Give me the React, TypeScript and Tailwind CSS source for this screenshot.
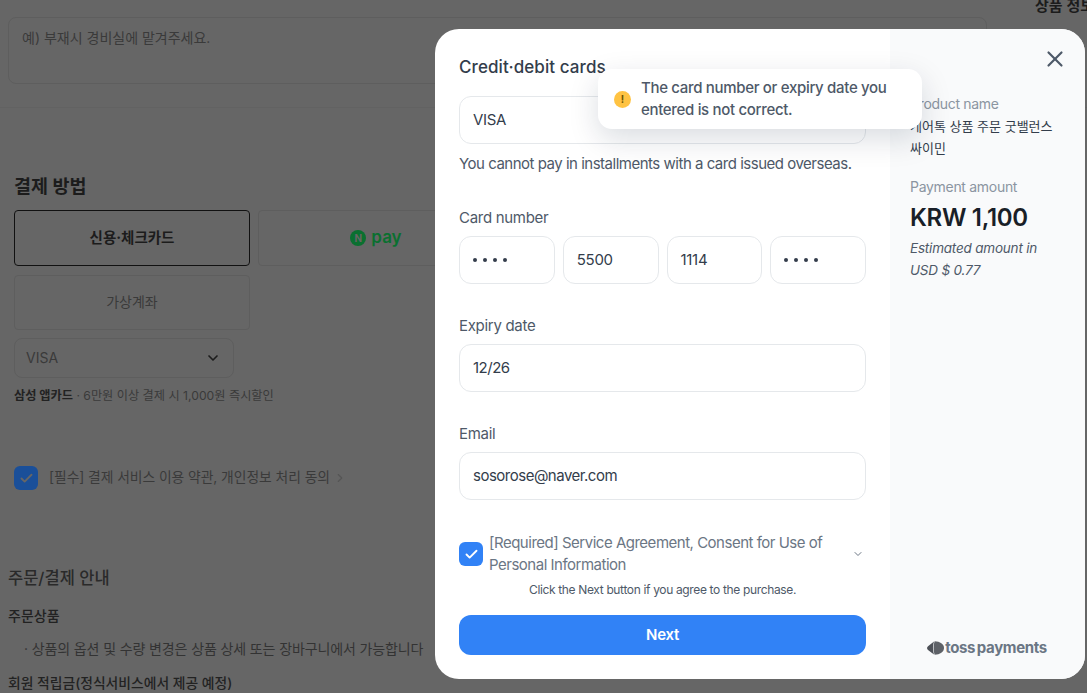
import { Check, ChevronDown, ChevronRight, X } from "lucide-react";

const font = "font-['Inter','Noto_Sans_CJK_KR',sans-serif]";

function Field({ label, value }: { label: string; value: string }) {
  return (
    <div className="mt-[30px]">
      <div className="text-[15px] leading-[24px] text-[#4e5968]">{label}</div>
      <div className="mt-[6px] flex h-[48px] items-center rounded-[12px] border border-[#e5e8eb] px-[13px] text-[15px] tracking-[-0.5px] text-[#333d4b]">
        {value}
      </div>
    </div>
  );
}

function Dots() {
  return (
    <span className="flex gap-[6.5px]">
      <i className="h-[3.5px] w-[3.5px] rounded-full bg-[#333d4b]" />
      <i className="h-[3.5px] w-[3.5px] rounded-full bg-[#333d4b]" />
      <i className="h-[3.5px] w-[3.5px] rounded-full bg-[#333d4b]" />
      <i className="h-[3.5px] w-[3.5px] rounded-full bg-[#333d4b]" />
    </span>
  );
}

function PageBehind() {
  return (
    <div className="text-[#2a2a2a]">
      {/* request note */}
      <div className="h-[108px] border-b border-[#626262] pt-[17px] pl-[8px] pr-[100px]">
        <div className="h-[67px] rounded-[8px] border border-[#5e5e5e] px-[13px] py-[10px] text-[14px] leading-[20px] text-[#3a3a3a]">
          예) 부재시 경비실에 맡겨주세요.
        </div>
      </div>

      {/* payment method */}
      <div className="pl-[14px] pt-[65px]">
        <h2 className="text-[18.5px] leading-[26px] font-bold text-[#1c1c1c]">결제 방법</h2>
        <div className="mt-[11px] grid w-[480px] grid-cols-[236px_236px] gap-x-[8px] gap-y-[9px]">
          <div className="flex h-[56px] items-center justify-center rounded-[4px] border border-[#111] pb-[1px] text-[14.5px] font-bold text-[#1c1c1c]">
            신용·체크카드
          </div>
          <div className="flex h-[56px] items-center justify-center gap-[5px] rounded-[4px] border border-[#5e5e5e]">
            <span className="flex h-[16px] w-[16px] items-center justify-center rounded-full bg-[#0a7030] text-[10px] font-bold text-[#666]">
              N
            </span>
            <span className="pb-[2px] text-[17px] leading-[16px] font-semibold text-[#0a7030]">pay</span>
          </div>
          <div className="flex h-[55px] items-center justify-center rounded-[4px] border border-[#5e5e5e] pb-[3px] text-[14px] text-[#3a3a3a]">
            가상계좌
          </div>
        </div>
        <div className="mt-[8px] flex h-[40px] w-[220px] items-center justify-between rounded-[8px] border border-[#5e5e5e] pb-[1px] pl-[11px] pr-[12px] text-[14px] text-[#3a3a3a]">
          VISA
          <ChevronDown size={16} strokeWidth={2.5} className="text-[#1c1c1c]" />
        </div>
        <p className="mt-[9px] text-[12.2px] leading-[18px] text-[#3a3a3a]">
          <b className="text-[#222]">삼성 앱카드</b> · 6만원 이상 결제 시 1,000원 즉시할인
        </p>
        <div className="mt-[61px] flex items-center gap-[11px]">
          <span className="flex h-[24px] w-[24px] items-center justify-center rounded-[6px] bg-[#1a4f99]">
            <Check size={15} strokeWidth={3} className="text-[#666]" />
          </span>
          <span className="pb-[2px] text-[13.8px] tracking-[-0.05px] text-[#3a3a3a]">
            [필수] 결제 서비스 이용 약관, 개인정보 처리 동의
          </span>
          <ChevronRight size={14} className="-ml-[8px] text-[#555]" />
        </div>
      </div>

      {/* order notice */}
      <div className="pl-[8px] pt-[76px]">
        <h3 className="text-[16.5px] leading-[24px] font-medium text-[#2a2a2a]">주문/결제 안내</h3>
        <div className="mt-[16px] text-[14px] leading-[20px] font-medium text-[#222]">주문상품</div>
        <div className="mt-[13px] pl-[16px] text-[14px] leading-[20px] tracking-[-0.12px] text-[#333]">
          · 상품의 옵션 및 수량 변경은 상품 상세 또는 장바구니에서 가능합니다
        </div>
        <div className="mt-[14px] text-[13.8px] leading-[20px] font-medium text-[#222]">
          회원 적립금(정식서비스에서 제공 예정)
        </div>
      </div>
    </div>
  );
}

export default function App() {
  return (
    <div className={`relative h-[693px] w-[1087px] overflow-hidden bg-[#666666] ${font}`}>
      <PageBehind />
      <div className="absolute top-[-4px] left-[1035px] text-[15px] leading-[20px] font-semibold whitespace-nowrap text-[#1c1c1c]">
        상품 정보
      </div>

      {/* modal */}
      <div className="absolute top-[29px] left-[435px] flex h-[650px] w-[650px] overflow-hidden rounded-[24px] bg-white">
        <div className="w-[455px] px-[24px] pt-[24px] tracking-[-0.3px]">
          <h1 className="text-[17px] leading-[28px] font-medium tracking-[0.08px] text-[#333d4b]">Credit·debit cards</h1>
          <div className="mt-[15px] flex h-[48px] items-center rounded-[12px] border border-[#e5e8eb] px-[13px] text-[15px] text-[#333d4b]">
            VISA
          </div>
          <p className="mt-[8px] text-[15px] leading-[24px] tracking-[-0.49px] whitespace-nowrap text-[#4e5968]">
            You cannot pay in installments with a card issued overseas.
          </p>

          <div className="mt-[30px] text-[15px] leading-[24px] text-[#4e5968]">Card number</div>
          <div className="mt-[6px] grid grid-cols-4 gap-[8px]">
            <div className="flex h-[48px] items-center rounded-[12px] border border-[#e5e8eb] px-[13px]"><Dots /></div>
            <div className="flex h-[48px] items-center rounded-[12px] border border-[#e5e8eb] px-[13px] text-[15px] text-[#333d4b]">5500</div>
            <div className="flex h-[48px] items-center rounded-[12px] border border-[#e5e8eb] px-[13px] text-[15px] text-[#333d4b]">1114</div>
            <div className="flex h-[48px] items-center rounded-[12px] border border-[#e5e8eb] px-[13px]"><Dots /></div>
          </div>

          <Field label="Expiry date" value="12/26" />
          <Field label="Email" value="sosorose@naver.com" />

          <div className="mt-[32px] flex items-center gap-[6px]">
            <span className="flex h-[24px] w-[24px] shrink-0 items-center justify-center rounded-[6px] bg-[#3182f6]">
              <Check size={15} strokeWidth={3} className="text-white" />
            </span>
            <span className="w-[350px] text-[15px] leading-[22px] tracking-[-0.49px] text-[#6b7684]">
              [Required] Service Agreement, Consent for Use of Personal Information
            </span>
            <ChevronDown size={12} className="ml-auto mr-[2px] text-[#6b7684]" />
          </div>
          <p className="mt-[5px] text-center text-[12px] leading-[18px] tracking-[-0.35px] text-[#4e5968]">
            Click the Next button if you agree to the purchase.
          </p>
          <button className="mt-[16px] flex h-[40px] w-full items-center justify-center rounded-[12px] bg-[#3182f6] text-[15px] font-semibold text-white">
            Next
          </button>
        </div>

        <aside className="flex flex-1 flex-col bg-[#f9fafb] pl-[20px] pr-[24px]">
          <div className="mt-[63px] text-[14px] leading-[24px] tracking-[-0.3px] text-[#8b95a1]">Product name</div>
          <div className="-mt-[1px] text-[13px] leading-[22px] text-[#333d4b]">
            케어톡 상품 주문 굿밸런스 싸이민
          </div>
          <div className="mt-[16px] text-[14px] leading-[24px] tracking-[-0.3px] text-[#8b95a1]">Payment amount</div>
          <div className="mt-[3px] text-[24px] leading-[32px] font-semibold tracking-[-0.3px] text-[#191f28]">KRW 1,100</div>
          <div className="mt-[3px] text-[13.5px] leading-[22px] tracking-[-0.2px] text-[#4e5968] italic">
            Estimated amount in USD $ 0.77
          </div>
          <div className="mt-auto mb-[23px] flex items-center justify-center gap-[1px] pl-[3px]">
            <svg width="17" height="14" viewBox="0 0 17 14">
              <path d="M7 .5 1 5.2C-.3 6.3-.3 7.9 1 9l6 4.6C5.6 9.5 5.6 4.6 7 .5Z" fill="#4e5158" />
              <path d="M7.6 .3C13 .4 17 3.2 17 7s-4 6.6-9.4 6.7C6.2 9.5 6.2 4.5 7.6 .3Z" fill="#5e6167" />
            </svg>
            <span className="text-[15px] leading-[16px] font-bold tracking-[-0.35px] [word-spacing:-1.5px] text-[#6b7684]">toss payments</span>
          </div>
        </aside>
      </div>

      <button className="absolute top-[46px] left-[1042px] text-[#4e5968]">
        <X size={26} strokeWidth={2} />
      </button>

      {/* toast */}
      <div className="absolute top-[69px] left-[598px] flex h-[60px] w-[324px] items-center gap-[10px] rounded-[14px] bg-white pl-[16px] shadow-[0_10px_30px_rgba(0,27,55,0.15)]">
        <span className="flex h-[17px] w-[17px] shrink-0 items-center justify-center rounded-full bg-[#ffc342] text-[10px] leading-[10px] font-bold text-[#6b5300]">
          !
        </span>
        <span className="w-[270px] text-[15px] leading-[22px] font-medium tracking-[-0.32px] text-[#4e5968]">
          The card number or expiry date you entered is not correct.
        </span>
      </div>
    </div>
  );
}
